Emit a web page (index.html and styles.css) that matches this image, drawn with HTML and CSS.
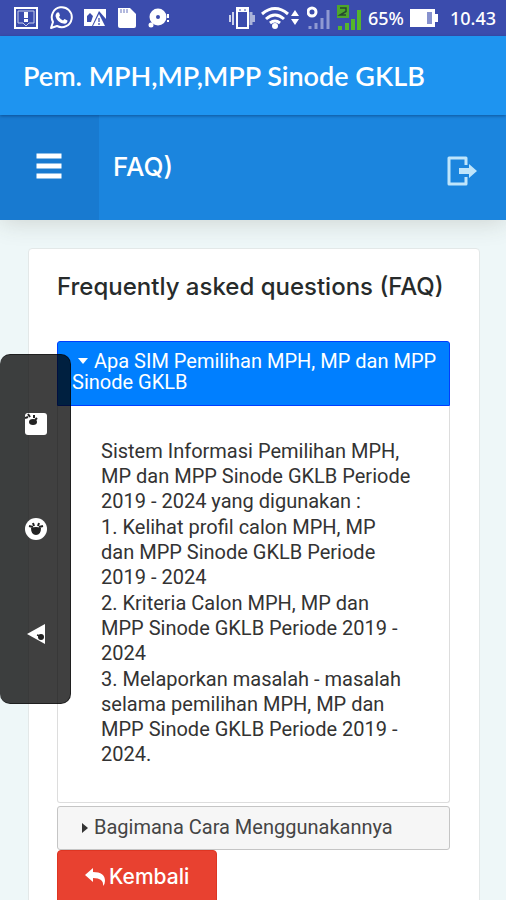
FILE: index.html
```html
<!DOCTYPE html>
<html lang="id">
  <head>
    <meta charset="UTF-8" />
    <meta name="viewport" content="width=device-width, initial-scale=1.0" />
    <title>FAQ</title>
    <link rel="stylesheet" href="styles.css">
  </head>

  <body>
    <div class="statusbar">
      <div class="status-left">
        <svg width="24" height="22" viewBox="0 0 24 22">
          <path d="M1 1h22v20H1z" fill="none" stroke="#fff" stroke-width="2" />
          <path d="M4 4h16v12h-5l-3 3-3-3H4z" fill="none" stroke="#c5cbea" stroke-width="1" />
          <path d="M10 5h4v6h-4zM10 12h4v3h-4z" fill="#fff" />
        </svg>
        <svg width="24" height="24" viewBox="0 0 24 24">
          <path d="M2 22l2-6a10 10 0 1 1 4 4z" fill="none" stroke="#fff" stroke-width="2" stroke-linejoin="round" />
          <path d="M8 6.500l2 0 1 3-1 1.500q1.500 2.500 4 3.500l1.500-1.500 3 1.500q0 3-3 3.200Q8 17 6.500 10 6.500 8 8 6.500z" fill="#fff" />
        </svg>
        <svg width="22" height="18" viewBox="0 0 22 18">
          <path d="M0 0h22v17H0z" fill="#fff" />
          <path d="M3 13V7l3-3 3 3-2 6zM15 2l7 8v7H8z" fill="#3b4cad" />
          <path d="M15 5l6 12H9z" fill="#fff" />
          <path d="M14 9h2v4h-2zM14 14h2v2h-2z" fill="#858fcd" />
        </svg>
        <svg width="20" height="22" viewBox="0 0 20 22">
          <path d="M1 1h12l6 6v12q0 2-2 2H3q-2 0-2-2z" fill="#fff" />
          <path d="M4 2v4M7 2v4M10 2v4" stroke="#6673bd" stroke-width="1" />
        </svg>
        <svg width="22" height="20" viewBox="0 0 22 20">
          <circle cx="10" cy="9" r="8.500" fill="#fff" />
          <circle cx="10" cy="9" r="2" fill="#3b4cad" />
          <circle cx="3" cy="17" r="2.500" fill="#fff" />
          <path d="M20 6v4M20 12v2" stroke="#fff" stroke-width="2" />
        </svg>
      </div>
      <div class="status-right">
        <svg width="26" height="24" viewBox="0 0 26 24">
          <path d="M8 2h11v20H8z" fill="none" stroke="#fff" stroke-width="2" />
          <path d="M8 2h11v4H8z" fill="#fff" />
          <path d="M10 4h2M15 4h2" stroke="#3b4cad" />
          <path d="M1 9v7M4 6v13" stroke="#fff" stroke-width="1.500" />
          <path d="M22 6v13M25 9v7" stroke="#aab3da" stroke-width="3" />
        </svg>
        <svg width="40" height="24" viewBox="0 0 40 24">
          <path d="M1 8q13-11 26 0M5 13q9-8 18 0M9 17q5-4 10 0" fill="none" stroke="#fff" stroke-width="3" />
          <circle cx="14" cy="20" r="3" fill="#fff" />
          <path d="M30 10l4-6 4 6zM30 13h8l-4 6z" fill="#fff" />
        </svg>
        <svg width="24" height="24" viewBox="0 0 24 24">
          <circle cx="5" cy="6" r="4" fill="none" stroke="#fff" stroke-width="3" />
          <path d="M3 20v3M9 17v6M15 12v11M21 4v19" stroke="#8f99d2" stroke-width="3" />
        </svg>
        <svg width="25" height="26" viewBox="0 0 25 26">
          <path d="M0 0h12v13H0z" fill="#4ea62c" />
          <path d="M3 3h6v3.500L3 10h6" fill="none" stroke="#26482f" stroke-width="1.500" />
          <path d="M3 21v4M10 18v7M16 14v11M22 5v20" stroke="#55b52b" stroke-width="4" />
        </svg>
        <span class="percent">65%</span>
        <svg width="28" height="20" viewBox="0 0 28 20">
          <path d="M0 1h25v5h3v8h-3v5H0z" fill="#fff" />
          <path d="M17 4h5v12h-5z" fill="#8792ce" />
        </svg>
        <span class="clock">10.43</span>
      </div>
    </div>

    <header class="appbar">Pem. MPH,MP,MPP Sinode GKLB</header>

    <nav class="navbar">
      <button class="menu" aria-label="Menu">
        <svg width="26" height="26" viewBox="0 0 26 26">
          <path d="M3 3h20M3 13h20M3 23h20" stroke="#fff" stroke-width="5" stroke-linecap="square" />
        </svg>
      </button>
      <h1>FAQ)</h1>
      <a href="#" class="logout" aria-label="Keluar">
        <svg width="30" height="30" viewBox="0 0 30 30">
          <path d="M19 9V2H2v26h17v-7" fill="none" stroke="#bfe5fb" stroke-width="3" stroke-linejoin="round" />
          <path d="M12 12h10V8l8 7-8 7v-4H12z" fill="#bfe5fb" />
        </svg>
      </a>
    </nav>

    <main>
      <section class="card">
        <h2>Frequently asked questions (FAQ)</h2>

        <div class="accordion">
          <button class="question" aria-expanded="true" aria-controls="jawaban1">Apa SIM Pemilihan MPH, MP dan MPP Sinode GKLB</button>
          <div class="answer" id="jawaban1">
            <p>Sistem Informasi Pemilihan MPH, MP dan MPP Sinode GKLB Periode 2019 - 2024 yang digunakan :</p>
            <p>1. Kelihat profil calon MPH, MP dan MPP Sinode GKLB Periode 2019 - 2024</p>
            <p>2. Kriteria Calon MPH, MP dan MPP Sinode GKLB Periode 2019 - 2024</p>
            <p>3. Melaporkan masalah - masalah selama pemilihan MPH, MP dan MPP Sinode GKLB Periode 2019 - 2024.</p>
          </div>
          <button class="question" aria-expanded="false">Bagimana Cara Menggunakannya</button>
        </div>

        <a href="#" class="back">
          <svg width="20" height="18" viewBox="0 0 20 18">
            <path d="M0 7l8-7v4q12 0 12 9 0 3-2 5 1-8-10-8v4z" fill="#fff" />
          </svg>
          Kembali
        </a>
      </section>
    </main>

    <!-- floating navigation keys -->
    <div class="keys">
      <button aria-label="Aplikasi terbaru">
        <svg width="22" height="22" viewBox="0 0 22 22">
          <rect width="22" height="22" rx="3" fill="#fff" />
          <ellipse cx="8" cy="9" rx="4" ry="3" fill="#222" />
          <path d="M0 5l3-1M3 1l2 3M9 2v3M12 5l-2 2" stroke="#222" stroke-width="2" />
        </svg>
      </button>
      <button aria-label="Beranda">
        <svg width="22" height="22" viewBox="0 0 22 22">
          <circle cx="11" cy="11" r="11" fill="#fff" />
          <path d="M6 10q5-2 10 0 0 7-5 7t-5-7z" fill="#222" />
          <path d="M4 8l4 1M8 5l1 3M14 5l-1 3M18 8l-4 1" stroke="#222" stroke-width="2" />
        </svg>
      </button>
      <button aria-label="Kembali">
        <svg width="22" height="22" viewBox="0 0 22 22">
          <path d="M2 11L20 1v20z" fill="#fff" />
          <circle cx="16" cy="14" r="3" fill="#222" />
          <path d="M12 12l3 1" stroke="#222" stroke-width="1.500" />
        </svg>
      </button>
    </div>

    <script>
      const questions = document.querySelectorAll(".question");

      questions.forEach((question) => question.addEventListener("click", toggle));

      function toggle() {
        const open = this.getAttribute("aria-expanded") == "true";
        this.setAttribute("aria-expanded", !open);
        const answer = document.getElementById(this.getAttribute("aria-controls"));
        if (answer) {
          answer.hidden = open;
        }
      }
    </script>
  </body>
</html>
```
FILE: styles.css
```css
* {
  box-sizing: border-box;
}
body {
  margin: 0;
  background-color: #eef7f8;
  font-family: Roboto, sans-serif;
  font-size: 20px;
  color: #333;
}
button {
  font: inherit;
  border: 0;
  cursor: pointer;
}
svg {
  display: block;
  flex: none;
}
h1,
h2,
p {
  margin: 0;
}

.statusbar {
  display: flex;
  justify-content: space-between;
  align-items: center;
  height: 36px;
  padding: 0 10px 0 14px;
  background-color: #3b4cad;
  color: #fff;
  font-family: "Noto Sans", sans-serif;
  font-size: 18px;
  font-weight: 500;
}
.status-left {
  display: flex;
  align-items: center;
  gap: 11px;
}
.status-right {
  display: flex;
  align-items: center;
  gap: 6px;
}
.clock {
  margin-left: 6px;
}

.appbar {
  position: relative;
  height: 79px;
  padding: 0 23px;
  background-color: #1e94f0;
  box-shadow: 0 1px 3px rgba(0, 40, 90, 0.5);
  color: #fff;
  font-family: Lato, sans-serif;
  font-size: 27px;
  font-weight: 600;
  line-height: 80px;
}

.navbar {
  display: flex;
  align-items: center;
  height: 105px;
  background-color: #1b85de;
  box-shadow: 0 1px 24px rgba(60, 60, 40, 0.2);
}
.menu {
  display: flex;
  align-items: center;
  align-self: stretch;
  width: 99px;
  padding: 0 36px 3px;
  background-color: #187ad0;
}
.navbar h1 {
  flex: 1;
  padding: 0 0 3px 14px;
  color: #fff;
  font-family: Inter, sans-serif;
  font-size: 26px;
  font-weight: 500;
}
.logout {
  padding: 6px 29px 0 0;
}

main {
  padding: 28px 26px 28px 28px;
}
.card {
  padding: 22px 29px 28px 28px;
  border: 1px solid #e3e8e8;
  border-radius: 4px;
  background-color: #fff;
}
.card h2 {
  margin-bottom: 38px;
  color: #272b2b;
  font-family: Inter, sans-serif;
  font-size: 24px;
  font-weight: 500;
  line-height: 32px;
  white-space: nowrap;
}

.question {
  display: block;
  width: 100%;
  padding: 10px 8px 11px 14px;
  border: 1px solid #c5c5c5;
  border-radius: 3px;
  background-color: #f6f6f6;
  color: #454545;
  line-height: 21px;
  text-align: left;
}
.question::before {
  content: "";
  display: inline-block;
  margin: 0 6px 1px 10px;
  border: 5px solid transparent;
  border-left: 6px solid #333;
  border-right: 0;
}
.question[aria-expanded="true"] {
  padding: 9px 8px 12px 14px;
  border-color: #003eff;
  border-radius: 3px 3px 0 0;
  background-color: #007fff;
  color: #fff;
}
.question[aria-expanded="true"]::before {
  margin: 0 6px 4px;
  border: 5px solid transparent;
  border-top: 6px solid #fff;
  border-bottom: 0;
}
.answer {
  display: grid;
  gap: 1px;
  margin-bottom: 3px;
  padding: 33px 37px 35px 43px;
  border: 1px solid #ddd;
  border-top: 0;
  border-radius: 0 0 3px 3px;
  line-height: 25px;
}
.answer[hidden] {
  display: none;
}

.back {
  display: inline-flex;
  align-items: center;
  gap: 4px;
  padding: 10px 27px;
  border: 1px solid #de3522;
  border-radius: 4px;
  background-color: #e84130;
  color: #fff;
  font-family: Inter, sans-serif;
  font-size: 21px;
  font-weight: 500;
  line-height: 32px;
  text-decoration: none;
}

.keys {
  position: fixed;
  top: 354px;
  left: 0;
  display: flex;
  flex-direction: column;
  gap: 83px;
  padding: 58px 23px 58px 25px;
  border: 1px solid rgba(0, 0, 0, 0.5);
  border-left: 0;
  border-radius: 10px;
  background-color: rgba(0, 0, 0, 0.75);
}
.keys button {
  padding: 0;
  background: none;
}
```
